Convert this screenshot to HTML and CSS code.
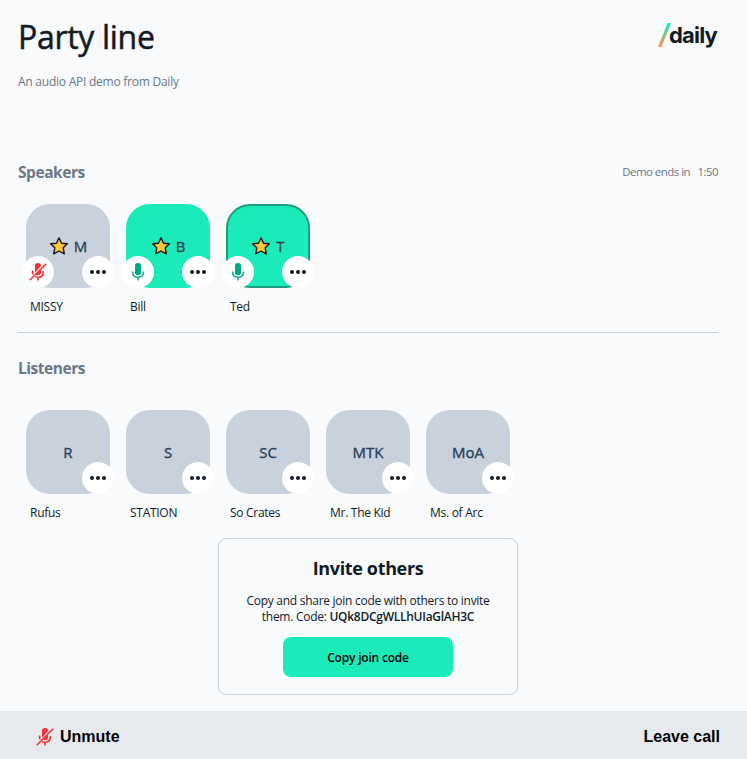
FILE: index.html
```
<!DOCTYPE html>
<html lang="en">
<head>
<meta charset="utf-8">
<title>Party line</title>
<link rel="stylesheet" href="styles.css">
</head>
<body>
<svg class="defs" width="0" height="0" aria-hidden="true">
  <defs>
    <symbol id="star" viewBox="0 0 20 20"><path d="M10 1.8 12.5 7.2 18.4 7.8 14.2 11.8 15.3 17.8 10 15 4.7 17.8 5.8 11.8 1.6 7.8 7.5 7.2Z" fill="#ffc83d" stroke="#17171c" stroke-width="1.4" stroke-linejoin="round"/></symbol>
    <symbol id="mic" viewBox="0 0 18 20"><rect x="6" y="1" width="6" height="12" rx="2.6" fill="currentColor"/><path d="M3.600 9.600v.9c0 2.800 2.200 4.700 5.400 4.700s5.400-1.900 5.400-4.700v-.9M9 15.200v3.400" fill="none" stroke="currentColor" stroke-width="1.400"/></symbol>
    <symbol id="muted" viewBox="0 0 20 20"><path d="M7 4.200C7 2.200 8 1 10 1s3 1.200 3 3L7 10.800ZM8.200 12.600 13 7.800V10.500c0 2-1.200 2.700-3 2.700-.8 0-1.300-.2-1.800-.6Z" fill="currentColor"/><path d="M4.600 8.400v2.200c0 .7.200 1.300.5 1.900M7.200 14.600c.8.500 1.800.7 2.800.7 3.200 0 5.300-1.800 5.300-4.700V8.900M10 15.300v3.300M1.700 18.200 18.200 1.700" fill="none" stroke="currentColor" stroke-width="1.600"/></symbol>
    <symbol id="dots" viewBox="0 0 16 4"><circle cx="2" cy="2" r="2" fill="#121a24"/><circle cx="8" cy="2" r="2" fill="#121a24"/><circle cx="14" cy="2" r="2" fill="#121a24"/></symbol>
  </defs>
</svg>
<div class="app">
  <main class="page">
    <header class="header">
      <div>
        <h1 class="title">Party line</h1>
        <p class="subtitle">An audio API demo from Daily</p>
      </div>
      <div class="logo">
        <svg class="slash" width="13" height="24" viewBox="0 0 13 24"><defs><linearGradient id="g" x1="0" y1="0" x2="0" y2="1"><stop offset="0.05" stop-color="#1bebb9"/><stop offset="1" stop-color="#ff9254"/></linearGradient></defs><path d="M9.600 0H13L3.400 24H0Z" fill="url(#g)"/></svg>
        <span class="wordmark">daily</span>
      </div>
    </header>

    <section class="speakers">
      <div class="section-head">
        <h2 class="heading">Speakers</h2>
        <p class="timer">Demo ends in <span class="time">1:50</span></p>
      </div>
      <div class="people">
        <div class="person">
          <div class="avatar"><svg class="star"><use href="#star"/></svg><span class="initials">M</span>
            <span class="badge badge-mic off"><svg width="20" height="20"><use href="#muted"/></svg></span>
            <span class="badge badge-more"><svg width="16" height="4"><use href="#dots"/></svg></span></div>
          <p class="name">MISSY</p>
        </div>
        <div class="person">
          <div class="avatar live"><svg class="star"><use href="#star"/></svg><span class="initials">B</span>
            <span class="badge badge-mic"><svg width="18" height="20"><use href="#mic"/></svg></span>
            <span class="badge badge-more"><svg width="16" height="4"><use href="#dots"/></svg></span></div>
          <p class="name">Bill</p>
        </div>
        <div class="person">
          <div class="avatar live talking"><svg class="star"><use href="#star"/></svg><span class="initials">T</span>
            <span class="badge badge-mic"><svg width="18" height="20"><use href="#mic"/></svg></span>
            <span class="badge badge-more"><svg width="16" height="4"><use href="#dots"/></svg></span></div>
          <p class="name">Ted</p>
        </div>
      </div>
    </section>

    <section class="listeners">
      <h2 class="heading">Listeners</h2>
      <div class="people">
        <div class="person">
          <div class="avatar"><span class="initials">R</span><span class="badge badge-more"><svg width="16" height="4"><use href="#dots"/></svg></span></div>
          <p class="name">Rufus</p>
        </div>
        <div class="person">
          <div class="avatar"><span class="initials">S</span><span class="badge badge-more"><svg width="16" height="4"><use href="#dots"/></svg></span></div>
          <p class="name">STATION</p>
        </div>
        <div class="person">
          <div class="avatar"><span class="initials">SC</span><span class="badge badge-more"><svg width="16" height="4"><use href="#dots"/></svg></span></div>
          <p class="name">So Crates</p>
        </div>
        <div class="person">
          <div class="avatar"><span class="initials">MTK</span><span class="badge badge-more"><svg width="16" height="4"><use href="#dots"/></svg></span></div>
          <p class="name">Mr. The Kid</p>
        </div>
        <div class="person">
          <div class="avatar"><span class="initials">MoA</span><span class="badge badge-more"><svg width="16" height="4"><use href="#dots"/></svg></span></div>
          <p class="name">Ms. of Arc</p>
        </div>
      </div>
    </section>

    <section class="invite">
      <h2 class="invite-title">Invite others</h2>
      <p class="invite-text">Copy and share join code with others to invite<br>them. Code: <span class="code">UQk8DCgWLLhUIaGlAH3C</span></p>
      <button class="copy">Copy join code</button>
    </section>
  </main>
  <footer class="tray">
    <button class="tray-button"><svg class="tray-mic" width="20" height="20"><use href="#muted"/></svg>Unmute</button>
    <button class="tray-button">Leave call</button>
  </footer>
</div>
</body>
</html>
```
FILE: styles.css
```
* { box-sizing: border-box; }
body { margin: 0; background: #f8fafc; color: #121a24; font-family: "Open Sans", "Noto Sans", sans-serif; }
h1, h2, p { margin: 0; }
button { border: 0; padding: 0; background: none; color: #000; }
.defs { position: absolute; }
.app { display: flex; flex-direction: column; height: 759px; overflow: hidden; }
.page { flex: 1; width: 700px; margin-left: 18px; }
.header { display: flex; justify-content: space-between; height: 156px; padding-top: 15px; }
.title { font-size: 32px; font-weight: 400; line-height: 44px; letter-spacing: -0.3px; white-space: nowrap; -webkit-text-stroke: 0.5px currentColor; }
.subtitle { margin-top: 14px; color: #6b7785; font-size: 12px; line-height: 17px; letter-spacing: -0.24px; }
.logo { display: flex; align-items: flex-start; height: 24px; margin: 8px 1px 0 0; }
.slash { margin-right: -2px; }
.wordmark { font: 700 22px/24px Inter, sans-serif; letter-spacing: -0.8px; }
.section-head { display: flex; justify-content: space-between; align-items: center; height: 32px; }
.heading { color: #6b7785; font-size: 15.5px; font-weight: 700; line-height: 24px; letter-spacing: -0.45px; }
.timer { color: #6b7785; font-size: 11.5px; line-height: 16px; letter-spacing: -0.55px; }
.time { margin-left: 5px; }
.people { display: flex; }
.person { width: 100px; padding: 0 8px; }
.avatar { position: relative; display: flex; align-items: center; justify-content: center; width: 84px; height: 84px; border-radius: 24px; background: #c8d1dc; color: #2b3f56; }
.live { background: #1bebb9; }
.talking { border: 2px solid #1f9d7f; }
.star { width: 20px; height: 20px; margin-right: 5px; }
.initials { font-size: 15px; line-height: 24px; -webkit-text-stroke: 0.35px currentColor; }
.badge { position: absolute; bottom: 0; display: flex; align-items: center; justify-content: center; width: 32px; height: 32px; border-radius: 50%; background: #fff; color: #121a24; }
.badge-mic { left: -4px; color: #00a884; }
.badge-mic.off { color: #f63135; }
.badge-more { right: -4px; }
.talking .badge { bottom: -2px; }
.talking .badge-mic { left: -6px; }
.talking .badge-more { right: -6px; }
.name { margin: 11px 0 0 4px; font-size: 12px; line-height: 16px; letter-spacing: -0.28px; white-space: nowrap; }
.speakers { height: 177px; border-bottom: 1px solid #c8d1dc; }
.speakers .people { padding-top: 16px; }
.listeners { padding-top: 23px; }
.listeners .people { padding-top: 30px; }
.invite { width: 300px; height: 157px; margin: 17px auto 0; padding-top: 16px; border: 1px solid #c8d1dc; border-radius: 8px; text-align: center; }
.invite-title { font-size: 18px; font-weight: 700; line-height: 26px; letter-spacing: -0.35px; }
.invite-text { margin-top: 12px; font-size: 12px; line-height: 16px; letter-spacing: -0.27px; white-space: nowrap; }
.code { font-weight: 600; }
.copy { width: 170px; height: 40px; margin-top: 12px; padding-top: 1px; border-radius: 8px; background: #1bebb9; font: 600 12px/16px "Open Sans", sans-serif; letter-spacing: -0.2px; }
.tray { display: flex; justify-content: space-between; align-items: center; height: 48px; padding: 3px 27px 0 35px; background: #e6e9ee; }
.tray-button { display: flex; align-items: center; font: 700 16px/20px "Liberation Sans", sans-serif; }
.tray-mic { margin-right: 5px; color: #f63135; }
```
